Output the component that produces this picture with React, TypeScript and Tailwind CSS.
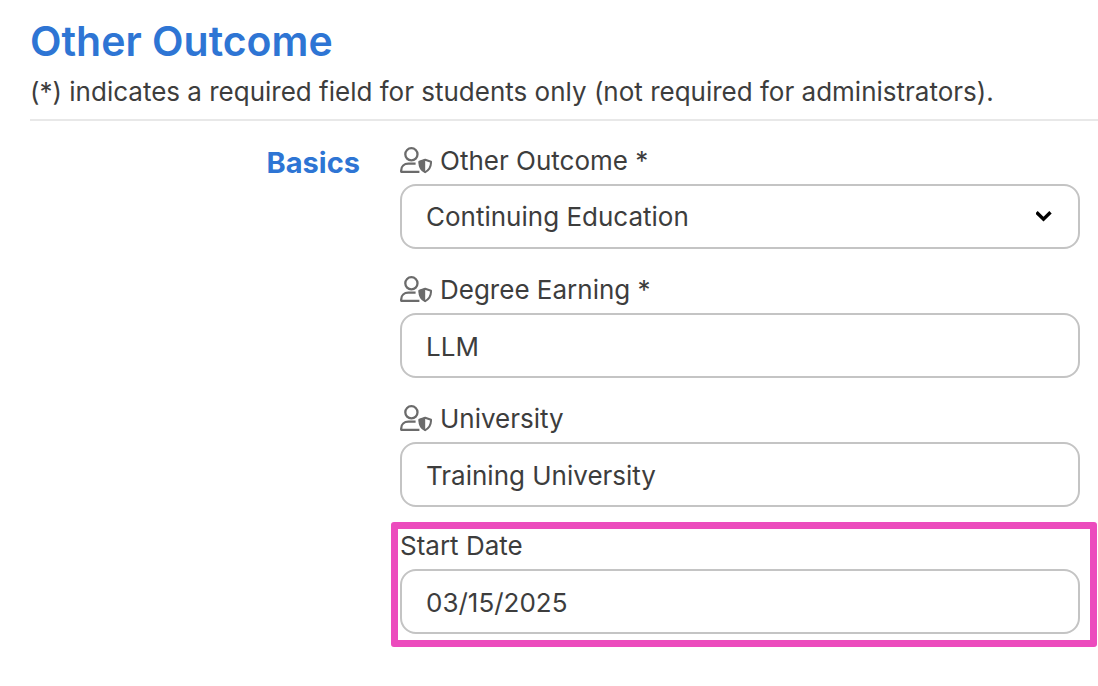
import { ReactNode } from 'react'

interface IFieldProps {
    id: string
    label: string
    restricted?: boolean
    children: ReactNode
}

const controlClass =
    'block w-full h-[65px] rounded-2xl border-2 border-[#c4c4c4] bg-white px-6 pt-px text-[26px] leading-8 text-[#3d3d3d] outline-none focus:border-[#2e75d4]'

// Person outline with a half filled shield in the lower right corner
const UserShieldIcon = () => (
    <svg
        className="h-[30px] w-8 shrink-0 text-[#6b6b6b]"
        viewBox="0 0 32 30"
        fill="none"
        stroke="currentColor"
        strokeWidth={2.3}
        strokeLinejoin="round"
        aria-hidden="true"
    >
        <circle cx="11.4" cy="9.3" r="6.1" />
        <path d="M15.6 18.7H8.4C4.2 18.7 1.2 21.4 1.2 25.4V26.8H19.4" />
        <path
            d="M25.2 14.8 31 16.7C31.2 21.6 29.2 25.1 25.2 27.2C21.2 25.1 19.2 21.6 19.4 16.7Z"
            strokeWidth={2}
        />
        <path
            d="M25.2 14.2 18.8 16.2C18.6 21.6 20.8 25.4 25.2 27.8Z"
            fill="currentColor"
            stroke="none"
        />
    </svg>
)

const Field = ({ id, label, restricted, children }: IFieldProps) => (
    <div>
        <label
            htmlFor={id}
            className="flex h-10 items-start gap-2 pt-px text-[26px] leading-8"
        >
            {restricted && <UserShieldIcon />}
            {label}
        </label>
        {children}
    </div>
)

export default function App() {
    return (
        <main className="min-h-screen bg-white pl-[30px] font-['Inter',sans-serif] text-[#3d3d3d]">
            <header className="border-b-2 border-[#e8e8e8] pt-4 pb-[11px]">
                <h1 className="text-[41px] leading-[50px] font-semibold text-[#2e75d4]">
                    Other Outcome
                </h1>
                <p className="pt-[10px] text-[26px] leading-8">
                    (*) indicates a required field for students only (not
                    required for administrators).
                </p>
            </header>
            <form className="flex gap-10 pt-[23px]">
                <h2 className="w-[330px] shrink-0 pt-px text-right text-[29px] leading-9 font-bold text-[#2e75d4]">
                    Basics
                </h2>
                <div className="min-w-0 flex-1 pr-[18px]">
                    <div className="flex flex-col gap-6">
                        <Field id="outcome" label="Other Outcome *" restricted>
                            <div className="relative">
                                <select
                                    id="outcome"
                                    className={`${controlClass} appearance-none`}
                                    defaultValue="Continuing Education"
                                >
                                    <option>Continuing Education</option>
                                </select>
                                <svg
                                    className="pointer-events-none absolute top-6 right-7 h-4 w-4 text-black"
                                    viewBox="0 0 16 16"
                                    fill="none"
                                    stroke="currentColor"
                                    strokeWidth={3.4}
                                    aria-hidden="true"
                                >
                                    <path d="M0.5 4.3 7.5 11.2 14.5 4.3" />
                                </svg>
                            </div>
                        </Field>
                        <Field id="degree" label="Degree Earning *" restricted>
                            <input
                                id="degree"
                                type="text"
                                className={controlClass}
                                defaultValue="LLM"
                            />
                        </Field>
                        <Field id="university" label="University" restricted>
                            <input
                                id="university"
                                type="text"
                                className={controlClass}
                                defaultValue="Training University"
                            />
                        </Field>
                    </div>
                    {/* Highlighted field, the frame reaches past the column */}
                    <div className="mt-[15px] -mr-[17px] -ml-[9px] rounded-[3px] border-[7px] border-[#ec4bbd] pr-[10px] pb-[6px] pl-[2px]">
                        <Field id="start-date" label="Start Date">
                            <input
                                id="start-date"
                                type="text"
                                className={controlClass}
                                defaultValue="03/15/2025"
                            />
                        </Field>
                    </div>
                </div>
            </form>
        </main>
    )
}
